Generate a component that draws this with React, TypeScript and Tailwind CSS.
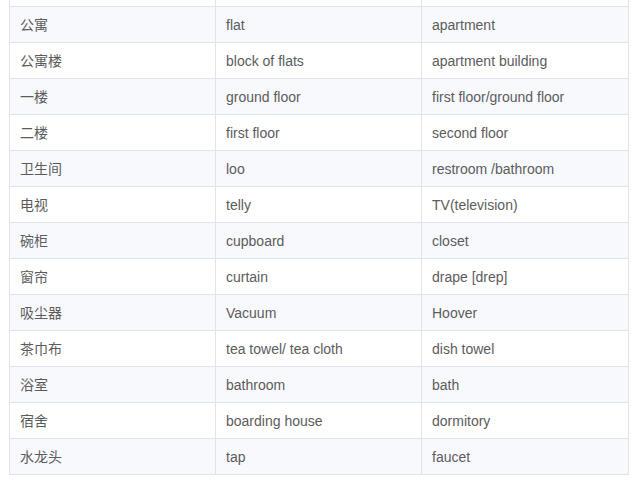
const rows: [string, string, string][] = [
  ['公寓', 'flat', 'apartment'],
  ['公寓楼', 'block of flats', 'apartment building'],
  ['一楼', 'ground floor', 'first floor/ground floor'],
  ['二楼', 'first floor', 'second floor'],
  ['卫生间', 'loo', 'restroom /bathroom'],
  ['电视', 'telly', 'TV(television)'],
  ['碗柜', 'cupboard', 'closet'],
  ['窗帘', 'curtain', 'drape [drep]'],
  ['吸尘器', 'Vacuum', 'Hoover'],
  ['茶巾布', 'tea towel/ tea cloth', 'dish towel'],
  ['浴室', 'bathroom', 'bath'],
  ['宿舍', 'boarding house', 'dormitory'],
  ['水龙头', 'tap', 'faucet'],
];

const cell = 'flex items-center border-r border-[#dfe3ea] pl-[10px] pt-[2px]';

export default function App() {
  return (
    <div className="h-[481px] w-[634px] overflow-hidden bg-white font-['Liberation_Sans','Noto_Sans_CJK_SC',sans-serif] text-[14px] text-[#5c5c5c]">
      <div className="ml-[9px] w-[620px] border-l border-[#dfe3ea]">
        {/* partial row cut off at the top */}
        <div className="flex h-[7px] border-b border-[#dfe3ea]">
          <div className="w-[206px] border-r border-[#dfe3ea]" />
          <div className="w-[206px] border-r border-[#dfe3ea]" />
          <div className="w-[207px] border-r border-[#dfe3ea]" />
        </div>

        {rows.map(([zh, uk, us], i) => (
          <div
            key={zh}
            className={`flex h-[36px] border-b border-[#dfe3ea] ${i % 2 === 0 ? 'bg-[#f8f9fc]' : 'bg-white'}`}
          >
            <div className={`${cell} w-[206px]`}>{zh}</div>
            <div className={`${cell} w-[206px]`}>{uk}</div>
            <div className={`${cell} w-[207px]`}>{us}</div>
          </div>
        ))}
      </div>
    </div>
  );
}
